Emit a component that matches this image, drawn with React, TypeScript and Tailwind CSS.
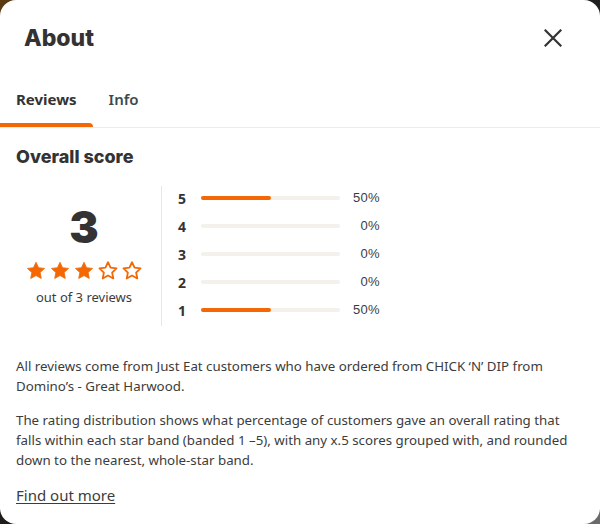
import React from 'react'

const ORANGE = '#f36805'

function Star({ filled }: { filled: boolean }) {
  return (
    <svg width="20" height="19" viewBox="0 0 24 23" className="shrink-0">
      <path
        d="M12 1.5l3.1 6.6 7.2.9-5.3 5 1.4 7.1L12 17.6l-6.4 3.5L7 14l-5.3-5 7.2-.9z"
        fill={filled ? ORANGE : 'none'}
        stroke={ORANGE}
        strokeWidth={filled ? 1 : 2.2}
        strokeLinejoin="round"
      />
    </svg>
  )
}

const rows = [
  { n: 5, pct: 50 },
  { n: 4, pct: 0 },
  { n: 3, pct: 0 },
  { n: 2, pct: 0 },
  { n: 1, pct: 50 },
]

export default function App() {
  return (
    <div className="h-[524px] w-[600px] bg-[linear-gradient(135deg,#5b3a12_0%,#1a1a1a_50%,#6b6b6b_100%)]">
      <div className="flex h-full flex-col rounded-2xl bg-white font-['Noto_Sans',sans-serif] text-[#3c3c3c]">
        <header className="flex h-[76px] items-center justify-between pl-6 pr-[38px]">
          <h1 className="font-['Inter',sans-serif] text-[23px] font-extrabold text-[#333]">About</h1>
          <button className="text-[#333]">
            <svg width="18" height="18" viewBox="0 0 18 18">
              <path d="M1.5 1.5l15 15M16.5 1.5l-15 15" stroke="currentColor" strokeWidth="2.2" strokeLinecap="square" />
            </svg>
          </button>
        </header>

        <nav className="flex border-b border-[#ececec]">
          <div className="relative flex h-[51px] items-center px-4 pb-1 text-[15px] font-bold text-[#333]">
            Reviews
            <span className="absolute bottom-0 left-0 h-1 w-full rounded-tr-sm" style={{ backgroundColor: ORANGE }} />
          </div>
          <div className="flex h-[51px] items-center px-4 pb-1 text-[15px] font-semibold text-[#3d4a4c]">Info</div>
        </nav>

        <section className="px-4 pt-4">
          <h2 className="font-['Inter',sans-serif] text-[18px] font-extrabold leading-[26px] text-[#333]">Overall score</h2>

          <div className="mt-4 flex">
            <div className="flex w-[136px] flex-col items-center justify-center">
              <div className="font-['Inter',sans-serif] text-[44px] font-black leading-none text-[#333]">3</div>
              <div className="mt-3 flex gap-1">
                <Star filled />
                <Star filled />
                <Star filled />
                <Star filled={false} />
                <Star filled={false} />
              </div>
              <div className="mt-2 text-[13px]">out of 3 reviews</div>
            </div>

            <div className="ml-[9px] border-l border-[#e6e6e6] pl-4">
              <div className="-mt-[2px] mb-[2px]">
                {rows.map((r) => (
                  <div key={r.n} className="flex h-7 items-center">
                    <span className="w-[23px] text-[14px] font-bold text-[#333]">{r.n}</span>
                    <div className="h-1 w-[139px] rounded-full bg-[#f4f1ed]">
                      <div className="h-1 rounded-full" style={{ width: `${r.pct}%`, backgroundColor: ORANGE }} />
                    </div>
                    <span className="w-[40px] text-right font-['Liberation_Sans',sans-serif] text-[13px] tracking-wide">{r.pct}%</span>
                  </div>
                ))}
              </div>
            </div>
          </div>

          <p className="mt-[30px] text-[13.3px] leading-[20px]">
            All reviews come from Just Eat customers who have ordered from CHICK ‘N’ DIP from Domino’s - Great Harwood.
          </p>
          <p className="mt-[14px] text-[13.3px] leading-[20px]">
            The rating distribution shows what percentage of customers gave an overall rating that falls within each star band (banded 1 –5), with any x.5 scores grouped with, and rounded down to the nearest, whole-star band.
          </p>
          <a className="mt-[13px] inline-block text-[15px] leading-6 underline underline-offset-2">Find out more</a>
        </section>
      </div>
    </div>
  )
}
